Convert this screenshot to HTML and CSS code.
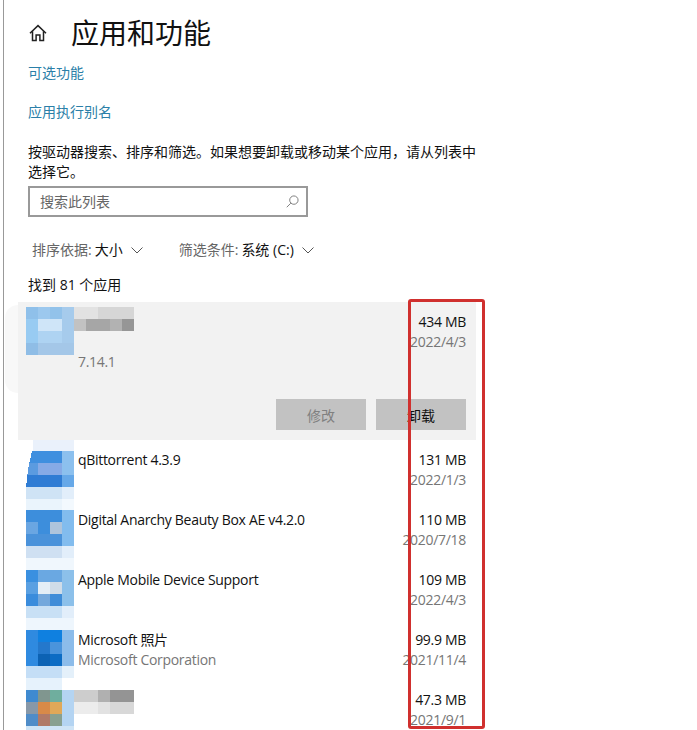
FILE: index.html
```html
<!DOCTYPE html>
<html lang="zh-CN">
<head>
  <meta charset="UTF-8">
  <title>应用和功能</title>
  <link rel="stylesheet" href="styles.css">
</head>
<body>
  <div class="page">
    <header class="title-row">
      <svg class="home-icon" viewBox="0 0 18 18" fill="none" stroke="#222" stroke-width="1.5">
        <path d="M1 9.2 9 1.6l8 7.6"/>
        <path d="M3.5 7.2v9.3h3.6v-5.6h3.800v5.600h3.600V7.2"/>
      </svg>
      <h1 class="title">应用和功能</h1>
    </header>
    <a class="link link-first">可选功能</a>
    <a class="link link-second">应用执行别名</a>
    <p class="intro">按驱动器搜索、排序和筛选。如果想要卸载或移动某个应用，请从列表中选择它。</p>
    <div class="search">
      <span class="search-text">搜索此列表</span>
      <svg class="search-icon" viewBox="0 0 14 14" fill="none" stroke="#777" stroke-width="1">
        <circle cx="8.5" cy="5.5" r="4.5"/>
        <path d="M5.2 8.8 .8 13.2"/>
      </svg>
    </div>
    <div class="filters">
      <div class="filter">
        <span class="filter-label">排序依据:</span> <span>大小</span>
        <svg class="chevron" viewBox="0 0 12 7" fill="none" stroke="#555" stroke-width="1"><path d="M.5 .5 6 6l5.500-5.500"/></svg>
      </div>
      <div class="filter">
        <span class="filter-label">筛选条件:</span> <span>系统 (C:)</span>
        <svg class="chevron" viewBox="0 0 12 7" fill="none" stroke="#555" stroke-width="1"><path d="M.5 .5 6 6l5.500-5.500"/></svg>
      </div>
    </div>
    <div class="count">找到 81 个应用</div>

    <div class="app-panel">
      <div class="smudge"></div>
      <div class="app-top">
        <svg class="mosaic mosaic-short" viewBox="0 0 4 4" shape-rendering="crispEdges">
          <rect width="1" height="1" fill="#8fc0ea"/><rect x="1" width="1" height="1" fill="#9cc8ee"/><rect x="2" width="1" height="1" fill="#92c2ea"/><rect x="3" width="1" height="1" fill="#a6cbec"/>
          <rect y="1" width="1" height="1" fill="#98cbf2"/><rect x="1" y="1" width="2" height="1" fill="#cfe5f8"/><rect x="3" y="1" width="1" height="1" fill="#a6cbec"/>
          <rect y="2" width="1" height="1" fill="#98cbf2"/><rect x="1" y="2" width="2" height="1" fill="#aed3f2"/><rect x="3" y="2" width="1" height="1" fill="#a6cbec"/>
          <rect y="3" width="1" height="1" fill="#8fbde6"/><rect x="1" y="3" width="3" height="1" fill="#a4c7e8"/>
        </svg>
        <div class="app-text">
          <svg class="blur-name" viewBox="0 0 5 2" shape-rendering="crispEdges">
            <rect width="2" height="1" fill="#e2e2e2"/><rect x="2" width="3" height="1" fill="#d6d6d6"/>
            <rect y="1" width="1" height="1" fill="#c2c2c2"/><rect x="1" y="1" width="2" height="1" fill="#a6a6a6"/><rect x="3" y="1" width="1" height="1" fill="#b2b2b2"/><rect x="4" y="1" width="1" height="1" fill="#969696"/>
          </svg>
          <div class="app-sub app-version">7.14.1</div>
        </div>
        <div class="app-meta">
          <div class="app-size">434 MB</div>
          <div class="app-sub">2022/4/3</div>
        </div>
      </div>
      <div class="app-actions">
        <button class="btn btn-off">修改</button>
        <button class="btn">卸载</button>
      </div>
    </div>

    <div class="app-row app-row-first">
      <svg class="mosaic mosaic-capped" viewBox="0 0 4 5.917" shape-rendering="crispEdges">
        <rect x=".6" width="3.400" height=".917" fill="#eaf1fb"/>
        <g transform="translate(0 .917)">
          <rect width="1" height="1" fill="#3f8fdf"/><rect x="1" width="2" height="1" fill="#3f8fdf"/><rect x="3" width="1" height="1" fill="#8cc0ee"/>
          <rect y="1" width="1" height="1" fill="#5b9be0"/><rect x="1" y="1" width="2" height="1" fill="#86aae6"/><rect x="3" y="1" width="1" height="1" fill="#8cc0ee"/>
          <rect y="2" width="3" height="1" fill="#2f7cd4"/><rect x="3" y="2" width="1" height="1" fill="#66a8e8"/>
          <rect y="3" width="3" height="1" fill="#cfe3f5"/><rect x="3" y="3" width="1" height="1" fill="#e2eefa"/>
          <rect y="4" width="3" height="1" fill="#eaf4fc"/><rect x="3" y="4" width="1" height="1" fill="#f3f9fe"/>
          <path d="M0 0h.5L.17 1.500 0 3z" fill="#fff"/>
        </g>
      </svg>
      <div class="app-text"><div class="app-name">qBittorrent 4.3.9</div></div>
      <div class="app-meta">
        <div class="app-size">131 MB</div>
        <div class="app-sub">2022/1/3</div>
      </div>
    </div>

    <div class="app-row">
      <svg class="mosaic" viewBox="0 0 4 5" shape-rendering="crispEdges">
        <rect width="3" height="3" fill="#3d8edc"/><rect x="3" width="1" height="3" fill="#82bcee"/>
        <rect y="1" width="1" height="1" fill="#6aa6e2"/><rect x="2" y="1" width="1" height="1" fill="#aec4dc"/>
        <rect y="2" width="3" height="1" fill="#4a92da"/>
        <rect y="3" width="3" height="1" fill="#cfe0f2"/><rect x="3" y="3" width="1" height="1" fill="#e2eefa"/>
        <rect y="4" width="4" height="1" fill="#f0f7fd"/>
      </svg>
      <div class="app-text"><div class="app-name">Digital Anarchy Beauty Box AE v4.2.0</div></div>
      <div class="app-meta">
        <div class="app-size">110 MB</div>
        <div class="app-sub">2020/7/18</div>
      </div>
    </div>

    <div class="app-row">
      <svg class="mosaic" viewBox="0 0 4 5" shape-rendering="crispEdges">
        <rect width="1" height="1" fill="#3a90e0"/><rect x="1" width="2" height="1" fill="#6aa8e2"/><rect x="3" width="1" height="3" fill="#8cc0ea"/>
        <rect y="1" width="1" height="1" fill="#5aa0e2"/><rect x="1" y="1" width="1" height="1" fill="#e4eef6"/><rect x="2" y="1" width="1" height="1" fill="#d0dce8"/>
        <rect y="2" width="1" height="1" fill="#3a8cdc"/><rect x="1" y="2" width="1" height="1" fill="#74a8dc"/><rect x="2" y="2" width="1" height="1" fill="#3f8cd8"/>
        <rect y="3" width="3" height="1" fill="#c8e0f5"/><rect x="3" y="3" width="1" height="1" fill="#e2eefa"/>
        <rect y="4" width="4" height="1" fill="#eef6fd"/>
      </svg>
      <div class="app-text"><div class="app-name">Apple Mobile Device Support</div></div>
      <div class="app-meta">
        <div class="app-size">109 MB</div>
        <div class="app-sub">2022/4/3</div>
      </div>
    </div>

    <div class="app-row">
      <svg class="mosaic" viewBox="0 0 4 5" shape-rendering="crispEdges">
        <rect width="1" height="3" fill="#2f8ae0"/><rect x="1" width="2" height="1" fill="#0f80e0"/><rect x="3" width="1" height="3" fill="#8cbcea"/>
        <rect x="1" y="1" width="1" height="1" fill="#2478cc"/><rect x="2" y="1" width="1" height="1" fill="#4a94dc"/>
        <rect x="1" y="2" width="1" height="1" fill="#0c62b4"/><rect x="2" y="2" width="1" height="1" fill="#0c6cc4"/>
        <rect y="3" width="3" height="1" fill="#c4def6"/><rect x="3" y="3" width="1" height="1" fill="#e4f0fa"/>
        <rect y="4" width="3" height="1" fill="#e6f2fc"/><rect x="3" y="4" width="1" height="1" fill="#fff"/>
      </svg>
      <div class="app-text">
        <div class="app-name">Microsoft 照片</div>
        <div class="app-sub">Microsoft Corporation</div>
      </div>
      <div class="app-meta">
        <div class="app-size">99.9 MB</div>
        <div class="app-sub">2021/11/4</div>
      </div>
    </div>

    <div class="app-row">
      <svg class="mosaic" viewBox="0 0 4 5" shape-rendering="crispEdges">
        <rect width="1" height="1" fill="#3f8ad0"/><rect x="1" width="1" height="1" fill="#80968f"/><rect x="2" width="1" height="1" fill="#6fae9e"/><rect x="3" width="1" height="3" fill="#b4d4f2"/>
        <rect y="1" width="1" height="1" fill="#8898a8"/><rect x="1" y="1" width="1" height="1" fill="#d88a48"/><rect x="2" y="1" width="1" height="1" fill="#e0a858"/>
        <rect y="2" width="1" height="1" fill="#4f8cc8"/><rect x="1" y="2" width="1" height="1" fill="#b07a68"/><rect x="2" y="2" width="1" height="1" fill="#88a090"/>
        <rect y="3" width="4" height="1" fill="#cfe4f6"/>
      </svg>
      <div class="app-text">
        <svg class="blur-name" viewBox="0 0 5 2" shape-rendering="crispEdges">
          <rect width="2" height="1" fill="#cdcdcd"/><rect x="2" width="1" height="1" fill="#b0b0b0"/><rect x="3" width="2" height="1" fill="#949494"/>
          <rect y="1" width="2" height="1" fill="#ececec"/><rect x="2" y="1" width="1" height="1" fill="#e2e2e2"/><rect x="3" y="1" width="2" height="1" fill="#d8d8d8"/>
        </svg>
      </div>
      <div class="app-meta">
        <div class="app-size">47.3 MB</div>
        <div class="app-sub">2021/9/1</div>
      </div>
    </div>
  </div>
  <div class="red-box"></div>
</body>
</html>
```

FILE: styles.css
```css
html, body {
  margin: 0;
  height: 730px;
  overflow: hidden;
  background-color: #fff;
}

body {
  position: relative;
  padding-left: 3px;
  box-sizing: border-box;
  color: #111;
  font-family: "Open Sans", "Noto Sans CJK SC", sans-serif;
  font-size: 14px;
}

.page {
  width: 438px;
  height: 730px;
  padding-left: 24px;
  border-left: 1px solid #999;
}

.title-row {
  display: flex;
  align-items: center;
  height: 40px;
  padding-top: 13px;
  margin-bottom: 10px;
}

.home-icon {
  width: 18px;
  height: 18px;
  margin-left: 1px;
}

.title {
  margin: 0 0 0 24px;
  font-size: 28px;
  font-weight: 400;
  line-height: 40px;
}

.link {
  display: block;
  color: #2b7fa8;
  line-height: 20px;
}

.link-first {
  margin-bottom: 19px;
}

.intro {
  margin: 20px -12px 4px 0;
  line-height: 20px;
}

.search {
  display: flex;
  align-items: center;
  justify-content: space-between;
  box-sizing: border-box;
  width: 280px;
  height: 31px;
  padding: 0 7px 0 10px;
  border: 2px solid #999;
  color: #666;
}

.search-text {
  padding-bottom: 2px;
}

.search-icon {
  width: 13px;
  height: 13px;
}

.filters {
  display: flex;
  gap: 36px;
  margin: 23px 0 0 4px;
  line-height: 20px;
}

.filter {
  display: flex;
  align-items: center;
  gap: 3px;
}

.filter-label {
  color: #666;
}

.chevron {
  width: 12px;
  height: 7px;
  margin-left: 5px;
}

.count {
  margin-top: 15px;
  line-height: 20px;
}

.app-panel {
  position: relative;
  box-sizing: border-box;
  height: 138px;
  margin: 7px -10px 0;
  padding: 5px 10px 0 8px;
  background-color: #f2f2f2;
}

.smudge {
  position: absolute;
  left: -13px;
  top: 3px;
  width: 13px;
  height: 88px;
  border-radius: 13px 0 0 13px;
  background-color: #f8f8f8;
}

.app-top {
  position: relative;
  display: flex;
}

.mosaic {
  flex: none;
  width: 48px;
  height: 60px;
  margin-left: -2px;
}

.app-panel .mosaic {
  margin-left: 0;
}

.mosaic-short {
  height: 48px;
}

.mosaic-capped {
  height: 71px;
  margin-top: -10px;
}

.app-text {
  flex: 1;
  padding-left: 4px;
}

.blur-name {
  display: block;
  width: 60px;
  height: 24px;
  margin-left: -4px;
}

.app-name {
  letter-spacing: -0.3px;
  line-height: 20px;
}

.app-sub {
  color: #767676;
  letter-spacing: -0.3px;
  line-height: 20px;
}

.app-version {
  margin-top: 21px;
}

.app-meta {
  text-align: right;
  white-space: nowrap;
}

.app-top .app-meta {
  padding-top: 5px;
}

.app-size {
  letter-spacing: -0.3px;
  line-height: 20px;
}

.app-actions {
  position: relative;
  display: flex;
  justify-content: flex-end;
  gap: 10px;
  margin-top: 27px;
}

.btn {
  width: 90px;
  height: 31px;
  padding: 0;
  border: none;
  background-color: #c2c2c2;
  color: #111;
  font-family: inherit;
  font-size: 14px;
}

.btn-off {
  color: #808080;
}

.app-row {
  display: flex;
  height: 60px;
}

.app-row-first {
  margin-top: 10px;
}

.red-box {
  position: absolute;
  left: 408px;
  top: 299px;
  box-sizing: border-box;
  width: 77px;
  height: 430px;
  border: 3px solid #d0302e;
  border-radius: 3px;
}
```
